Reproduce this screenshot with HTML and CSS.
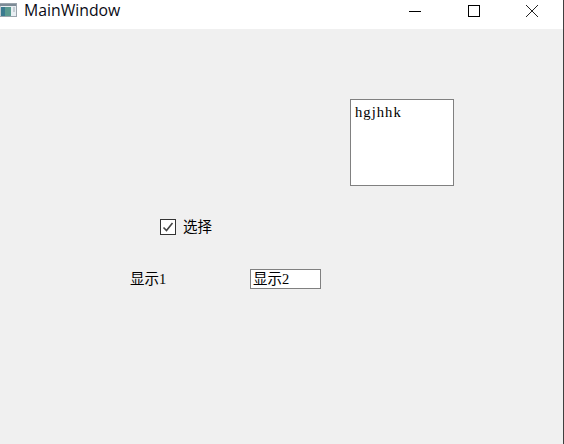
FILE: index.html
```html
<!DOCTYPE html>
<html lang="zh-CN">
<head>
    <meta charset="UTF-8">
    <title>MainWindow</title>
    <link rel="stylesheet" href="styles.css">
</head>
<body>
    <div class="window">
        <div class="titlebar">
            <svg class="app-icon" width="18" height="16" viewBox="0 0 18 16">
                <rect x="0" y="1.5" width="16.5" height="13" fill="#e8eef2" stroke="#9aa4ac"/>
                <rect x="0" y="2" width="16" height="2" fill="#7d8b96"/>
                <rect x="1" y="5" width="10" height="9" fill="#5a9a90"/>
                <rect x="1" y="5" width="4" height="9" fill="#3a7a8f"/>
                <rect x="13" y="5" width="2" height="5" fill="#c4ccd2"/>
            </svg>
            <span class="title">MainWindow</span>
            <div class="controls">
                <button class="ctl">
                    <svg width="16" height="16" viewBox="0 0 16 16"><path d="M1 8.5H13" stroke="#000" fill="none"/></svg>
                </button>
                <button class="ctl">
                    <svg width="16" height="16" viewBox="0 0 16 16"><rect x="2.5" y="2.5" width="11" height="11" stroke="#000" fill="none"/></svg>
                </button>
                <button class="ctl">
                    <svg width="16" height="16" viewBox="0 0 16 16"><path d="M2 2L14 14M14 2L2 14" stroke="#222" fill="none"/></svg>
                </button>
            </div>
        </div>
        <div class="client">
            <div class="memo-row">
                <div class="memo">hgjhhk</div>
            </div>
            <label class="check-row">
                <span class="checkbox">
                    <svg width="14" height="14" viewBox="0 0 14 14"><path d="M2.5 7.5L5.5 10.5L11.5 3" stroke="#444" stroke-width="1.6" fill="none"/></svg>
                </span>
                <span class="check-text">选择</span>
            </label>
            <div class="field-row">
                <span class="label">显示1</span>
                <div class="line-edit">显示2</div>
            </div>
        </div>
    </div>
</body>
</html>
```

FILE: styles.css
```css
*{margin:0;padding:0;box-sizing:border-box;}
html,body{width:564px;height:444px;overflow:hidden;}
body{font-family:"Liberation Serif","Noto Sans CJK SC",serif;font-size:14.5px;color:#000;}
.window{
    display:flex;
    flex-direction:column;
    width:564px;
    height:444px;
    background-color:#f0f0f0;
    border-right:1px solid #404040;
}
.titlebar{
    display:flex;
    align-items:center;
    flex:none;
    height:29px;
    padding-bottom:9px;
    background-color:#fff;
}
.app-icon{flex:none;width:18px;}
.title{
    margin-left:6px;
    font-family:"Open Sans","Noto Sans",sans-serif;
    font-size:15.8px;
    color:#0a0a14;
}
.controls{display:flex;margin-left:auto;padding-top:1px;padding-right:2px;}
.ctl{
    display:flex;
    align-items:center;
    justify-content:center;
    width:58px;
    height:20px;
    border:0;
    background:none;
    outline:none;
}
.client{flex:1;padding-top:70px;}
.memo-row{display:flex;padding-left:350px;}
.memo{
    width:104px;
    height:87px;
    padding:3px 4px;
    border:1px solid #808080;
    background-color:#fff;
    font-size:14.67px;
    letter-spacing:1px;
    line-height:18px;
}
.check-row{
    display:flex;
    align-items:center;
    height:16px;
    margin-top:33px;
    margin-left:160px;
}
.checkbox{
    display:flex;
    align-items:center;
    justify-content:center;
    width:16px;
    height:16px;
    border:1px solid #333;
    background-color:#fff;
}
.check-text{margin-left:7px;line-height:14px;}
.field-row{
    display:flex;
    align-items:center;
    height:20px;
    margin-top:34px;
    margin-left:130px;
}
.label{width:120px;line-height:18px;}
.line-edit{
    width:71px;
    height:20px;
    padding-left:2px;
    border:1px solid #808080;
    background-color:#fff;
    line-height:18px;
}
```
